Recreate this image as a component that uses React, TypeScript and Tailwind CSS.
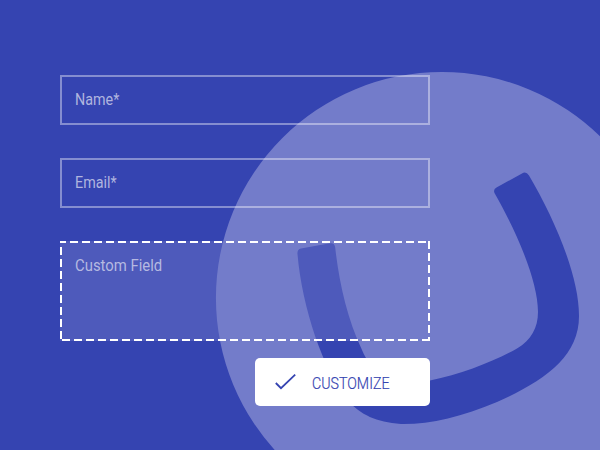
function Field({ label }: { label: string }) {
  return (
    <div className="h-[50px] border-2 border-white/40 px-[13px] pt-[11px]">
      <span className="inline-block origin-left scale-x-[0.895] text-base leading-6 text-[#b0b5df]">{label}</span>
    </div>
  );
}

export default function App() {
  return (
    <div className="relative h-[450px] w-[600px] overflow-hidden bg-[#3544b1] font-['Roboto',sans-serif]">
      <div className="absolute left-[60px] top-[241px] h-[100px] w-[370px] bg-[#4e5abb]" />
      <svg className="absolute inset-0" width="600" height="450" viewBox="0 0 600 450">
        <path
          fill="#737cca"
          fillRule="evenodd"
          d="M442 72a226 226 0 1 0 0 452a226 226 0 1 0 0-452Z M301 248.500L330 243.300Q334.500 242.500 335.200 247.500C339 282 347 318 362 350C373 376 394 386 430 380.500C462 374 495 361 517 348.500C531 340 538 328 538 312C538 280 516 231 494.500 193Q493 189.500 496.500 187.500L522 173.500Q526 171 529 175.500C554 218 579 275 579 316C579 357 544 381 497 402C462 417 429 424.500 401 424C376 422 361 415 347 400C324 371 302 308 297.500 254Q297 249.500 301 248.500Z"
        />
      </svg>
      <form className="relative flex w-[430px] flex-col gap-[33px] pl-[60px] pt-[75px]">
        <Field label="Name*" />
        <Field label="Email*" />
        <div className="relative h-[100px] px-[15px] pt-[13px]">
          <svg className="absolute inset-0" width="370" height="100" fill="none" stroke="white" strokeWidth="2">
            <path strokeDasharray="8 4" strokeDashoffset="2" d="M0 1H370" />
            <path strokeDasharray="8 4" d="M369 0V100" />
            <path strokeDasharray="8 4" strokeDashoffset="10" d="M0 99H370" />
            <path strokeDasharray="8 4" strokeDashoffset="6" d="M1 0V100" />
          </svg>
          <span className="inline-block origin-left scale-x-[0.93] text-base leading-6 text-[#b5b9e1]">Custom Field</span>
        </div>
        <button type="button" className="-mt-4 flex h-12 w-[175px] items-center self-end rounded-[5px] bg-white pl-5 text-[#3544b1]">
          <svg width="22" height="18" viewBox="0 0 22 18" fill="none" stroke="currentColor" strokeWidth="1.8">
            <path d="M0.800 10L6 15.200L20.200 1.700" />
          </svg>
          <span className="ml-[15px] mt-[3px] inline-block origin-left scale-x-[0.86] text-[16.5px] font-light leading-6 [-webkit-text-stroke:0.2px_#3544b1]">CUSTOMIZE</span>
        </button>
      </form>
    </div>
  );
}
